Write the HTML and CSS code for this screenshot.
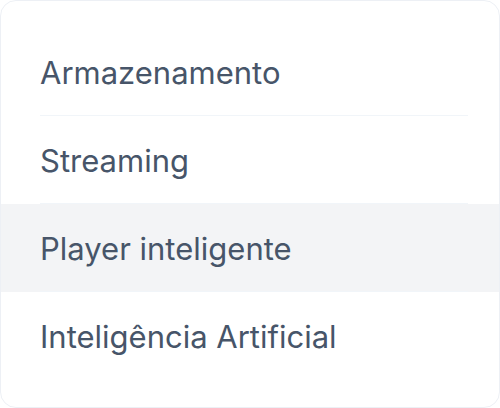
FILE: index.html
```html
<!DOCTYPE html>
<html lang="pt">
<head>
<meta charset="utf-8">
<link rel="stylesheet" href="styles.css">
</head>
<body>
<nav class="card">
  <ul class="menu">
    <li class="item"><a class="link">Armazenamento</a></li>
    <li class="item"><a class="link">Streaming</a></li>
    <li class="item active"><a class="link">Player inteligente</a></li>
    <li class="item"><a class="link last">Inteligência Artificial</a></li>
  </ul>
</nav>
</body>
</html>
```
FILE: styles.css
```css
html, body {
  margin: 0;
  padding: 0;
  background: #ffffff;
}
.card {
  box-sizing: border-box;
  width: 500px;
  height: 408px;
  border: 1px solid #edf0f5;
  border-radius: 16px;
  background: #ffffff;
  padding: 27px 0;
  overflow: hidden;
}
.menu {
  list-style: none;
  margin: 0;
  padding: 0;
}
.item {
  padding: 0 31px 0 39px;
}
.item.active {
  background: #f3f4f6;
}
.link {
  display: block;
  padding: 28px 0 26px;
  line-height: 33px;
  font-family: Inter, "Noto Sans", sans-serif;
  font-size: 31px;
  color: #475569;
  border-bottom: 1px solid #f1f5f9;
}
.link.last {
  border-bottom: none;
}
```
